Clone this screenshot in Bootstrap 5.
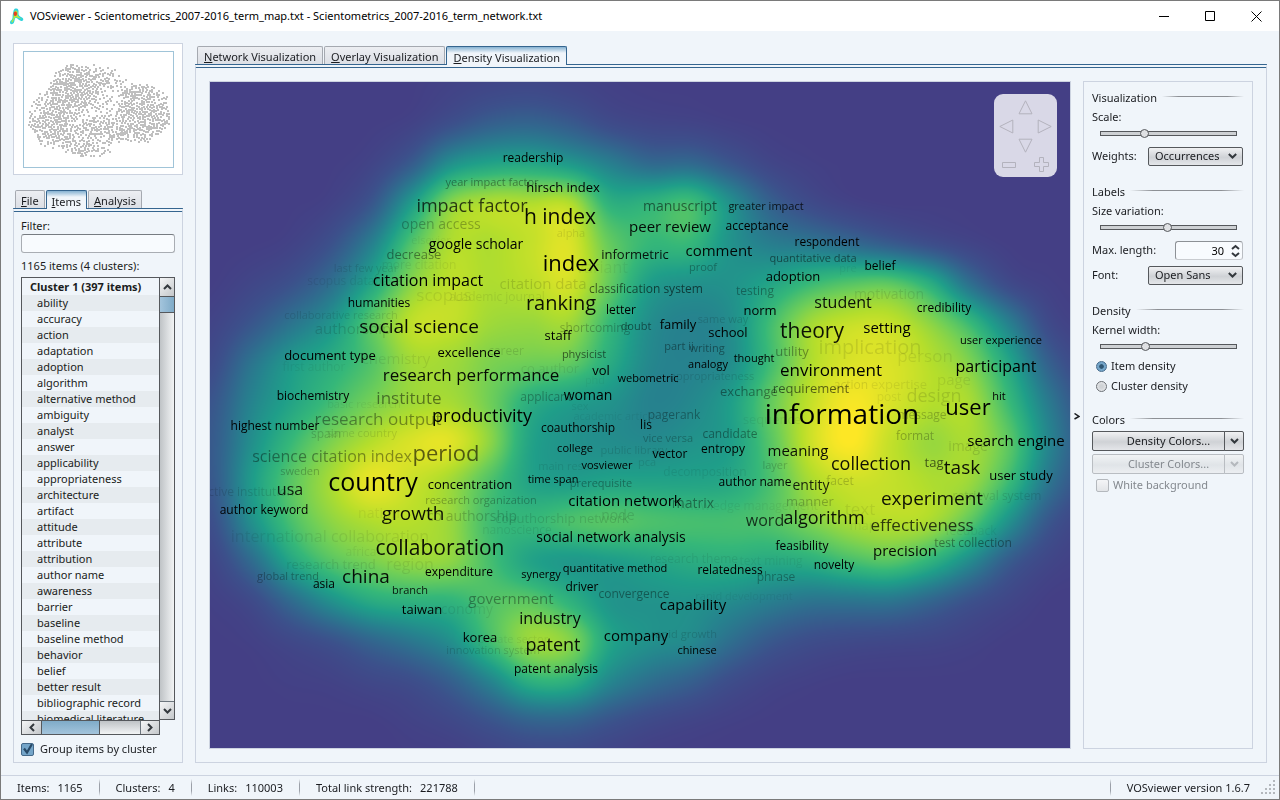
<!DOCTYPE html>
<html lang="en">
<head>
<meta charset="utf-8">
<meta name="viewport" content="width=device-width, initial-scale=1">
<title>VOSviewer</title>
<link rel="stylesheet" href="https://cdn.jsdelivr.net/npm/bootstrap@5.3.0/dist/css/bootstrap.min.css">
<style>
:root{--panel:#f0f5fa;--line:#ccd3e0;--blue:#35658f;--ink:#1a1c20;--dark:#55585c}
body{font:11px/16px "Noto Sans",sans-serif;color:var(--ink);background:var(--panel)}
.window{min-height:100vh;border:1px solid #7a7a7a}
.titlebar{height:30px;padding-left:8px;color:#000;line-height:30px}
.titlebar svg{display:block}
.caption{padding-left:6px}
.winbtn{width:46px;height:30px;border:0;background:none;padding:0;display:grid;place-items:center}
.workspace{padding:12px;gap:12px;flex:1 1 0;min-height:0}
.sidebar{width:170px;flex:none}
.overview{border:1px solid var(--line);padding:7px 8px 6px 9px;margin-bottom:15px}
.overview canvas{display:block;width:100%;border:1px solid #a0c4d8}
.vtabs{border:0;padding-left:2px;gap:1px;height:18px;position:relative;z-index:1}
.vtabs .nav-link{font-size:11px;line-height:15px;height:18px;padding:2px 6px 0;margin:0;color:var(--ink);border:1px solid #a5a9b0;border-bottom:0;border-radius:2px 2px 0 0;background:linear-gradient(#eceef2,#dcdfe5)}
.sidebar .vtabs .nav-link{padding:2px 5px 0}
.vtabs .nav-link.active{height:19px;border-color:var(--blue);color:var(--ink);background:linear-gradient(#86b2d2,var(--panel) 6px)}
.tabpane{border:1px solid var(--line);border-top:4px double var(--blue)}
.itempane{padding:6px 7px 5px}
.itempane .counts{padding:5px 0 3px}
.fieldbox{height:19px;border:1px solid #a9adb3;border-top-color:#777c82;border-radius:3px;background:#f8fbfe;font-size:11px;padding:0 4px;min-height:0}
.treebox{display:grid;grid-template-columns:1fr 15px;grid-template-rows:1fr 15px;flex:1 1 0;min-height:0}
.treelist{border:1px solid var(--dark);border-bottom:0;overflow:hidden;height:0;min-height:100%;list-style:none;margin:0;padding:1px 0 0}
.treelist li{line-height:16px;padding-left:15px;white-space:nowrap}
.treelist li:nth-child(even){background:#e6ebef}
.treelist li:first-child{padding-left:8px}
.barv,.barh{border:1px solid var(--dark);display:flex}
.barv{flex-direction:column;border-left:0;background:linear-gradient(90deg,#bfc3c6,#f2f4f5)}
.barh{background:linear-gradient(#bfc3c6,#f2f4f5)}
.barbtn{border:0;padding:0;display:grid;place-items:center;background:linear-gradient(135deg,#f5f6f7,#c4c7ca)}
.barv .barbtn{height:18px;width:100%}
.barh .barbtn{width:19px}
.barv .grab{height:17px;background:linear-gradient(90deg,#a3c4dc,#7fabc8);border:solid var(--dark);border-width:1px 0}
.barh .grab{width:59px;background:linear-gradient(#7fabc8,#a3c4dc);border:solid var(--dark);border-width:0 1px}
.groupopt{gap:6px;margin-top:6px}
.tick{appearance:none;width:13px;height:13px;margin:0;border:1px solid #b4b8bd;border-radius:2px;background:linear-gradient(#f4f5f7,#e2e4e7);flex:none}
.tick:checked{border-color:#44698a;background:#74a5c9 url("data:image/svg+xml,%3Csvg xmlns='http://www.w3.org/2000/svg' viewBox='0 0 11 11'%3E%3Cpath d='M2 4.5l3 4L10 0' fill='none' stroke='%23284a68' stroke-width='2.2'/%3E%3C/svg%3E")}
.dotpick{appearance:none;width:11px;height:11px;margin:0;border:1px solid #6c7075;border-radius:50%;background:radial-gradient(#cfd2d5 25%,#f1f2f4);flex:none}
.dotpick:checked{border-color:#44698a;background:radial-gradient(#2f5673 30%,#74a5c9 42%)}
.viewer{padding-top:3px}
.viewpane{padding:13px}
.mapbox{border:1px solid var(--line);background:#443f85;overflow:hidden;position:relative}
.mapbox canvas{position:absolute;inset:0;width:100%;height:100%;object-fit:cover}
.mapbox>svg{position:absolute;inset:0;width:100%;height:100%}
.mapbox text{font-family:"Open Sans",sans-serif;text-anchor:middle}
.navpad{position:absolute;top:12px;right:13px;width:63px;padding:4px 3px 3px;border-radius:9px;background:rgba(255,255,255,.8);display:grid;grid-template-columns:repeat(3,1fr);grid-auto-rows:19px}
.navpad button{border:0;background:none;padding:0;display:grid;place-items:center}
.navpad svg{fill:none;stroke:#b3b2bd}
.zoomrow{grid-column:1/4;padding:0 5px}
.collapser{width:12px;flex:none;border:0;background:none;padding:0}
.options{border:1px solid var(--line);padding:8px}
.options h2{font-size:11px;line-height:16px;margin:0 0 3px;display:flex;gap:5px;font-weight:400}
.options h2::after{content:"";flex:1;height:1px;margin-top:6px;background:linear-gradient(90deg,transparent,#8d9095 20%,#8d9095 80%,transparent)}
.options section{margin-bottom:18px}
.field{margin-top:5px;height:20px;padding-right:1px}
.slide{appearance:none;display:block;width:137px;height:16px;margin:0 0 0 8px;background:none}
.slide::-webkit-slider-runnable-track{height:5px;border:1px solid var(--dark);background:#ced1d4}
.slide::-webkit-slider-thumb{appearance:none;width:9px;height:9px;margin-top:-3px;border:1px solid var(--dark);border-radius:50%;background:#dfe1e4}
.pick{appearance:none;width:95px;height:19px;padding:0 6px;border:1px solid var(--dark);border-radius:2px;font-size:11px;line-height:16px;color:var(--ink);background:url("data:image/svg+xml,%3Csvg xmlns='http://www.w3.org/2000/svg' width='9' height='6'%3E%3Cpath d='M.8 1l3.700 3.500L8.200 1' fill='none' stroke='%2333383d' stroke-width='2'/%3E%3C/svg%3E") no-repeat right 5px center,linear-gradient(#f0f1f3,#cfd2d6 55%,#e4e6e9)}
.spin{width:68px}
.spin .fieldbox{width:100%;text-align:right;padding-right:18px;border-color:#8d9196 #b9bdc2 #c9ccd0 #8d9196}
.spin svg{position:absolute;right:2px;top:3px}
.split{margin-bottom:3px}
.split .btn{--bs-btn-font-size:11px;--bs-btn-line-height:16px;--bs-btn-padding-y:1px;--bs-btn-padding-x:0;--bs-btn-border-radius:2px;--bs-btn-color:#1a1c20;--bs-btn-border-color:#55585c;--bs-btn-disabled-color:#84898f;--bs-btn-disabled-border-color:#b9bdc2;--bs-btn-disabled-opacity:1;height:20px;background:linear-gradient(#f0f1f3,#cfd2d6 55%,#e4e6e9)}
.split .btn:disabled{background:linear-gradient(#f1f3f5,#e0e4e8 55%,#eceef1)}
.split .btn:first-child{padding-left:20px;flex:1}
.split .btn:last-child{flex:none;width:20px;display:grid;place-items:center}
.off{color:#84898f}
.statusbar{border-top:1px solid var(--line);height:24px;padding:0 3px 0 16px}
.sep{width:1px;height:17px;margin:0 16px;background:linear-gradient(transparent,#9ba0a8 30%,#9ba0a8 70%,transparent)}
.grip{margin-left:11px}
</style>
</head>
<body>
<div class="window d-flex flex-column">
  <header class="titlebar d-flex align-items-center bg-white">
    <svg width="15" height="17" viewBox="0 0 15 17"><path d="M6.500.500C9 0 10 2 9.500 4.500 9.300 7 10 8 13 9.500 15 10.500 14.500 13 12.500 13 10.500 13 8.500 10 6.500 9.800 5.500 11 6 12 5 14.500 4.200 16.500 1 17 1 14.500 1 12.500 2.500 12.500 3.200 11 4 9 3.300 8.500 3.800 6.500 4.500 5 4 1 6.500.500z" fill="#2fd3dc"/><path d="M6.500 2.500c2 0 2.500 1.500 2 3.500 0 2 2 3.500 4 5-2-.5-4-2-6-1.800C5 11 4.500 12.500 3.500 14.500 1.800 14.800 2.500 12.500 4 11c.8-1.500.2-2.500 1-4.500.2-1.500.2-4 1.500-4z" fill="#b6ea3c"/><ellipse cx="6.300" cy="5.800" rx="1.800" ry="2.200" fill="#e8431c"/></svg>
    <span class="caption flex-grow-1">VOSviewer - Scientometrics_2007-2016_term_map.txt - Scientometrics_2007-2016_term_network.txt</span>
    <button class="winbtn" aria-label="Minimize"><svg width="11" height="11"><path d="M0 5.500h10" stroke="#000"/></svg></button>
    <button class="winbtn" aria-label="Maximize"><svg width="11" height="11"><path d="M.5.500h9v9h-9z" fill="none" stroke="#000"/></svg></button>
    <button class="winbtn" aria-label="Close"><svg width="11" height="11"><path d="M.5.500l10 10M10.500.500l-10 10" stroke="#000"/></svg></button>
  </header>

  <main class="workspace d-flex">
    <aside class="sidebar d-flex flex-column">
      <div class="overview bg-white"><canvas id="overview" width="149" height="115"></canvas></div>
      <div class="nav nav-tabs vtabs flex-nowrap" role="tablist">
        <button class="nav-link" role="tab"><u>F</u>ile</button>
        <button class="nav-link active" role="tab"><u>I</u>tems</button>
        <button class="nav-link" role="tab"><u>A</u>nalysis</button>
      </div>
      <div class="tabpane itempane flex-grow-1 d-flex flex-column">
        <label for="filter">Filter:</label>
        <input id="filter" class="fieldbox w-100">
        <div class="counts">1165 items (4 clusters):</div>
        <div class="treebox">
          <ul class="treelist" id="tree"><li class="fw-bold">Cluster 1 (397 items)</li></ul>
          <div class="barv">
            <button class="barbtn" aria-label="Up"><svg width="9" height="6"><path d="M1 5l3.500-3.500L8 5" fill="none" stroke="#33383d" stroke-width="2"/></svg></button>
            <div class="grab"></div>
            <button class="barbtn mt-auto border-top border-secondary" aria-label="Down"><svg width="9" height="6"><path d="M1 1l3.500 3.500L8 1" fill="none" stroke="#33383d" stroke-width="2"/></svg></button>
          </div>
          <div class="barh">
            <button class="barbtn" aria-label="Left"><svg width="6" height="9"><path d="M5 1L1.500 4.500 5 8" fill="none" stroke="#33383d" stroke-width="2"/></svg></button>
            <div class="grab"></div>
            <button class="barbtn ms-auto border-start border-secondary" aria-label="Right"><svg width="6" height="9"><path d="M1 1l3.500 3.500L1 8" fill="none" stroke="#33383d" stroke-width="2"/></svg></button>
          </div>
        </div>
        <label class="groupopt d-flex align-items-center"><input type="checkbox" class="tick" checked><span>Group items by cluster</span></label>
      </div>
    </aside>

    <section class="viewer flex-grow-1 d-flex flex-column">
      <div class="nav nav-tabs vtabs flex-nowrap" role="tablist">
        <button class="nav-link" role="tab"><u>N</u>etwork Visualization</button>
        <button class="nav-link" role="tab"><u>O</u>verlay Visualization</button>
        <button class="nav-link active" role="tab"><u>D</u>ensity Visualization</button>
      </div>
      <div class="tabpane viewpane flex-grow-1 d-flex">
        <div class="mapbox flex-grow-1">
          <canvas id="density" width="860" height="666"></canvas>
          <svg id="labels" viewBox="0 0 860 666" preserveAspectRatio="xMidYMid slice"></svg>
          <div class="navpad">
            <span></span><button aria-label="Pan up"><svg width="15" height="15"><path d="M7.500.800l6.500 13H1z"/></svg></button><span></span>
            <button aria-label="Pan left"><svg width="15" height="15"><path d="M.8 7.500l13-6.500v13z"/></svg></button><span></span><button aria-label="Pan right"><svg width="15" height="15"><path d="M14.200 7.500L1.200 1v13z"/></svg></button>
            <span></span><button aria-label="Pan down"><svg width="15" height="15"><path d="M7.500 14.200L1 1.200h13z"/></svg></button><span></span>
            <div class="zoomrow d-flex justify-content-between">
              <button aria-label="Zoom out"><svg width="15" height="15"><path d="M.5 5.500h13v5H.500z"/></svg></button>
              <button aria-label="Zoom in"><svg width="15" height="15"><path d="M5.500.500h4v5h5v4h-5v5h-4v-5h-5v-4h5z"/></svg></button>
            </div>
          </div>
        </div>
        <button class="collapser" aria-label="Hide options"><svg width="6" height="7"><path d="M.5.500L5 3.500.500 6" fill="none" stroke="#1a1c20" stroke-width="1.500"/></svg></button>
        <aside class="sidebar options">
          <section>
            <h2>Visualization</h2>
            <label for="scale" class="d-block">Scale:</label>
            <input id="scale" type="range" class="slide" value="31">
            <div class="field d-flex justify-content-between align-items-center"><label for="weights">Weights:</label><select id="weights" class="pick"><option>Occurrences</option></select></div>
          </section>
          <section>
            <h2>Labels</h2>
            <label for="size" class="d-block">Size variation:</label>
            <input id="size" type="range" class="slide" value="49">
            <div class="field d-flex justify-content-between align-items-center"><label for="maxlen">Max. length:</label>
              <div class="spin position-relative"><input id="maxlen" class="fieldbox" value="30"><svg width="11" height="14"><path d="M2 5l3.500-3L9 5M2 9l3.500 3L9 9" fill="none" stroke="#33383d" stroke-width="2"/></svg></div></div>
            <div class="field d-flex justify-content-between align-items-center"><label for="font">Font:</label><select id="font" class="pick"><option>Open Sans</option></select></div>
          </section>
          <section>
            <h2>Density</h2>
            <label for="kernel" class="d-block">Kernel width:</label>
            <input id="kernel" type="range" class="slide" value="32">
            <label class="d-flex align-items-center gap-1 mt-1 ms-1"><input type="radio" name="kind" class="dotpick" checked>Item density</label>
            <label class="d-flex align-items-center gap-1 mt-1 ms-1"><input type="radio" name="kind" class="dotpick">Cluster density</label>
          </section>
          <section>
            <h2>Colors</h2>
            <div class="btn-group split d-flex"><button class="btn">Density Colors...</button><button class="btn" aria-label="Density color menu"><svg width="9" height="6"><path d="M1 1l3.500 3.500L8 1" fill="none" stroke="#33383d" stroke-width="2"/></svg></button></div>
            <div class="btn-group split d-flex"><button class="btn" disabled>Cluster Colors...</button><button class="btn" disabled aria-label="Cluster color menu"><svg width="9" height="6"><path d="M1 1l3.500 3.500L8 1" fill="none" stroke="#b4b8bd" stroke-width="2"/></svg></button></div>
            <label class="off d-flex align-items-center gap-1 ms-1"><input type="checkbox" class="tick" disabled>White background</label>
          </section>
        </aside>
      </div>
    </section>
  </main>

  <footer class="statusbar d-flex align-items-center">
    <span>Items:</span><span class="ms-2">1165</span><i class="sep"></i>
    <span>Clusters:</span><span class="ms-2">4</span><i class="sep"></i>
    <span>Links:</span><span class="ms-2">110003</span><i class="sep"></i>
    <span>Total link strength:</span><span class="ms-2">221788</span><i class="sep"></i>
    <i class="sep ms-auto"></i><span>VOSviewer version 1.6.7</span>
    <svg class="grip align-self-end mb-1" width="15" height="15" fill="#b4b8bd"><path d="M12 0h2v2h-2zM8 4h2v2H8zM12 4h2v2h-2zM4 8h2v2H4zM8 8h2v2H8zM12 8h2v2h-2zM0 12h2v2H0zM4 12h2v2H4zM8 12h2v2H8zM12 12h2v2h-2z"/></svg>
  </footer>
</div>
<script src="https://cdn.jsdelivr.net/npm/bootstrap@5.3.0/dist/js/bootstrap.bundle.min.js"></script>
<script>
// Items of the first cluster
'ability,accuracy,action,adaptation,adoption,algorithm,alternative method,ambiguity,analyst,answer,applicability,appropriateness,architecture,artifact,attitude,attribute,attribution,author name,awareness,barrier,baseline,baseline method,behavior,belief,better result,bibliographic record,biomedical literature'
  .split(',').forEach(t => { const li = document.createElement('li'); li.textContent = t; document.getElementById('tree').append(li); });

// Item density sampled every 40 px, 0 (empty) to 80 (densest)
const STEP = 40;
const grid = `
0 0 0 0 0 0 2 4 5 3 1 0 0 0 0 0 0 0 0 0 0 0 0
0 0 0 0 0 2 9 16 18 14 7 4 3 1 0 0 0 0 0 0 0 0 0
0 0 0 0 3 14 34 41 42 37 28 20 20 12 4 1 0 0 0 0 0 0 0
0 0 0 2 12 38 63 69 69 69 47 48 52 35 17 7 2 0 0 0 0 0 0
0 0 2 10 28 54 69 69 72 75 58 50 50 36 28 25 20 14 8 3 0 0 0
0 4 10 22 42 63 71 69 71 74 58 40 36 36 42 50 55 56 45 22 6 1 0
3 12 24 36 56 71 72 67 66 67 50 34 30 34 52 67 72 72 64 50 28 6 1
7 24 38 46 55 67 67 62 60 58 45 32 30 34 52 69 75 75 70 62 42 16 4
12 30 42 52 61 67 68 60 46 40 36 30 32 40 58 72 79 75 70 68 50 26 8
14 34 50 62 70 75 76 64 42 36 34 33 36 40 56 73 80 72 66 68 56 30 11
13 38 56 68 77 73 67 54 42 40 42 42 42 44 54 68 73 72 69 66 50 24 8
9 34 53 64 69 70 66 52 50 54 56 54 53 53 55 62 68 70 68 56 34 12 3
4 20 42 55 61 65 64 53 42 38 39 42 45 46 44 46 52 55 47 32 14 4 1
1 6 20 34 44 47 48 55 57 48 37 36 36 33 28 24 24 24 18 10 4 0 0
0 1 5 10 18 25 34 52 66 63 42 35 32 22 13 8 6 5 4 2 0 0 0
0 0 1 2 5 8 16 30 46 46 31 22 16 8 3 1 0 0 0 0 0 0 0
0 0 0 0 0 2 5 11 17 17 11 6 3 1 0 0 0 0 0 0 0 0 0
0 0 0 0 0 0 0 2 4 4 2 0 0 0 0 0 0 0 0 0 0 0 0`.trim().split('\n').map(r => r.split(' ').map(Number));
const clamp = (v, a, b) => Math.max(a, Math.min(b, v));
const at = (i, j) => grid[clamp(j, 0, 17)][clamp(i, 0, 22)];
const cubic = (a, b, c, d, t) => b + .5 * t * (c - a + t * (2 * a - 5 * b + 4 * c - d + t * (3 * (b - c) + d - a)));
function density(x, y) {
  const i = Math.floor(x / STEP), j = Math.floor(y / STEP), u = x / STEP - i, v = y / STEP - j;
  const r = [-1, 0, 1, 2].map(k => cubic(at(i - 1, j + k), at(i, j + k), at(i + 1, j + k), at(i + 2, j + k), u));
  return clamp(cubic(r[0], r[1], r[2], r[3], v), 0, 80);
}
const ramp = [[68,63,133],[60,80,139],[49,104,142],[38,130,142],[31,158,137],[53,183,121],[110,206,88],[181,222,43],[253,231,37]];
{
  const W = 860, H = 666, ctx = document.getElementById('density').getContext('2d'), img = ctx.createImageData(W, H);
  for (let y = 0, p = 0; y < H; y++) for (let x = 0; x < W; x++, p += 4) {
    const v = density(x, y) / 10, k = Math.min(7, Math.floor(v)), f = v - k;
    for (let c = 0; c < 3; c++) img.data[p + c] = ramp[k][c] + (ramp[k + 1][c] - ramp[k][c]) * f;
    img.data[p + 3] = 255;
  }
  ctx.putImageData(img, 0, 0);
}

// Overview: one dot per item, spread by density
{
  const ctx = document.getElementById('overview').getContext('2d'), dots = [];
  let s = 7; const rnd = () => (s = s * 16807 % 2147483647) / 2147483647;
  ctx.fillStyle = '#bfbfbf';
  for (let n = 0; n < 90000 && dots.length < 1165; n++) {
    const x = Math.floor(4 + rnd() * 141), y = Math.floor(12 + rnd() * 92), d = density(x / 149 * 860, y / 115 * 666);
    if (rnd() > ((d - 8) / 62) ** 2 || d < 20) continue;
    if (dots.some(q => Math.abs(q[0] - x) < 2 && Math.abs(q[1] - y) < 2)) continue;
    dots.push([x, y]); ctx.fillRect(x, y, 2, 2);
  }
}

// Labels: text, left, right, middle, size, opacity
const labels = `more citation,382,455,265,12,.07|last few year,333,398,268,11,.12|elsevier,411,450,240,11,.06|scopus database,306,402,281,12,.08|scopus,417,471,295,17,.08|academic journal,449,545,297,12,.08|collaborative research,284,397,315,11,.12|authorship,314,391,329,15,.14|chemistry,362,429,359,15,.08|first author,283,344,367,12,.06|career,488,524,351,12,.12|alpha,556,585,233,11,.11|variant,576,627,267,16,.05|citation data,500,585,284,15,.14|same way,697,748,319,11,.15|co author,521,579,368,13,.08|appropriateness,670,754,376,11,.13|phd,585,605,380,11,.04|pre,839,856,268,11,.05|motivation,853,924,294,14,.1|implication,819,921,347,20,.1|person,896,953,356,17,.08|action,833,868,385,12,.12|expertise,871,926,384,13,.08|page,937,970,380,15,.08|basic research,328,400,404,11,.06|same country,327,397,433,11,.12|nation,358,399,513,14,.06|international collaboration,229,431,536,16,.08|nanoscience,482,551,530,12,.08|africa,345,376,552,12,.06|research trend,288,374,564,13,.1|region,386,434,564,16,.08|economy,433,492,609,14,.08|sex,571,588,406,11,.06|academic article,574,655,416,11,.06|public library,599,669,450,11,.13|pca,638,655,462,11,.1|main research,541,609,466,11,.1|decomposition,664,745,472,12,.08|node,601,635,515,14,.12|coauthorship network,496,628,518,13,.13|knowledge management,680,817,506,12,.06|research theme,650,738,559,12,.08|text mining,740,801,561,12,.06|rapid development,694,793,596,11,.06|rapid growth,650,718,634,11,.15|private sector,479,547,639,11,.07|post,876,901,397,12,.07|design,906,962,396,18,.12|sequence,744,800,419,13,.06|text,844,875,509,17,.08|map,851,875,525,13,.05|feedback,945,996,531,12,.06|retrieval system,950,1043,496,12,.12|image,947,988,446,14,.13|innovation system,446,539,650,11,.16|co authorship,426,517,516,14,.2|productive institution,176,292,492,12,.14|spain,310,341,434,12,.18|facet,826,854,481,12,.2|layer,762,787,465,11,.2|sweden,280,319,471,11,.25|message,897,947,415,12,.24|manner,786,833,501,13,.25|vice versa,643,693,438,11,.28|shortcoming,560,630,328,12,.26|open access,400,481,224,14,.28|format,896,934,436,12,.28|research organization,425,536,500,11,.3|global trend,257,319,576,11,.33|phrase,756,795,577,12,.33|applicant,521,571,397,12,.3|proof,688,717,267,11,.32|testing,736,774,291,12,.35|prerequisite,570,632,483,11,.35|pagerank,647,700,415,12,.34|government,469,553,599,15,.36|science citation index,251,413,456,16,.4|research output,316,440,419,17,.4|candidate,702,757,434,12,.4|matrix,672,714,503,14,.4|convergence,598,670,594,12,.4|test collection,934,1011,543,12,.4|part ii,663,694,346,11,.42|writing,689,725,348,11,.42|exchange,721,777,391,13,.42|decrease,387,440,254,13,.42|year impact factor,445,538,182,11,.4|utility,775,809,351,13,.38|institute,377,441,398,17,.48|doubt,620,652,326,11,.5|quantitative data,768,857,258,11,.5|manuscript,641,718,206,14,.52|physicist,561,606,354,11,.58|requirement,773,848,388,13,.58|classification system,588,703,289,12,.6|period,412,480,453,22,.6|tag,924,943,462,13,.62|impact factor,416,527,206,18,.74|effectiveness,869,974,525,17,.74|word,746,784,520,16,.75|greater impact,729,803,206,11,.82|entity,792,830,485,14,.85|usa,276,303,489,16,.85|branch,392,428,590,11,.87|informetric,602,668,254,13,.9|google scholar,427,524,244,14,1|citation impact,371,485,280,16,1|humanities,348,410,303,12,1|social science,360,477,326,19,.95|document type,284,376,355,13,1|excellence,438,499,352,13,1|research performance,383,559,375,17,.95|readership,502,563,158,12,1|hirsch index,527,599,187,13,1|h index,524,596,216,21,.95|peer review,629,710,227,15,.95|acceptance,725,789,226,12,1|comment,686,752,251,15,.95|index,542,599,263,22,1|adoption,765,820,276,13,1|ranking,526,596,303,20,.92|letter,606,636,310,12,1|norm,743,776,310,13,1|family,660,696,324,13,1|school,708,747,332,13,1|staff,544,571,335,13,1|vol,592,610,370,13,1|analogy,687,728,364,11,1|thought,733,775,358,11,1|webometric,617,678,378,11,1|respondent,795,859,242,12,1|belief,864,896,266,12,1|student,813,872,302,16,.93|credibility,917,971,308,12,1|theory,779,844,330,21,.92|setting,864,910,328,15,1|user experience,960,1041,340,11,1|environment,780,882,370,17,1|participant,954,1037,366,16,1|biochemistry,277,349,396,12,1|highest number,231,319,426,12,1|productivity,432,532,416,18,1|country,328,417,482,25,1|concentration,428,512,484,13,1|author keyword,220,307,510,12,1|growth,382,444,513,19,.93|collaboration,375,505,547,21,.93|asia,312,335,584,12,1|china,342,390,576,19,.93|expenditure,425,492,572,12,1|taiwan,402,442,609,13,1|korea,463,497,637,13,1|woman,563,612,395,14,1|coauthorship,541,614,428,12,1|lis,640,652,425,12,1|college,557,593,448,11,1|vector,652,687,454,12,1|entropy,702,744,449,12,1|vosviewer,581,633,465,11,1|time span,527,578,479,11,1|author name,719,791,482,12,1|citation network,569,680,501,15,1|social network analysis,534,688,537,14,1|relatedness,697,763,570,12,1|synergy,521,561,574,11,1|quantitative method,561,668,568,11,1|driver,565,598,587,12,1|capability,660,726,605,15,.97|industry,518,581,618,16,.95|company,604,667,636,15,.97|patent,526,580,645,18,.92|chinese,677,716,650,11,1|patent analysis,514,598,669,12,1|information,765,918,414,28,1|hit,992,1006,396,11,1|user,945,990,407,22,1|search engine,968,1063,441,15,1|meaning,768,827,451,15,.93|collection,830,912,464,18,.92|task,943,980,467,19,.93|user study,989,1052,475,13,1|experiment,879,984,498,19,.92|algorithm,783,865,518,18,.92|feasibility,775,828,546,12,1|precision,873,936,551,15,.95|novelty,814,854,565,12,1`;
document.getElementById('labels').innerHTML = labels.split('|').map(l => {
  const [t, a, b, y, s, o] = l.split(',');
  return `<text x="${Math.round((+a + +b) / 2) - 210}" y="${Math.round(+y + s * .36) - 82}" font-size="${s}" opacity="${o}">${t}</text>`;
}).join('');
</script>
</body>
</html>
